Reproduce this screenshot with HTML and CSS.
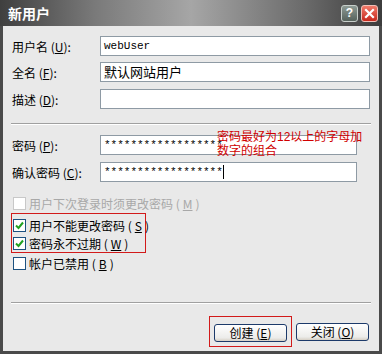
FILE: index.html
```html
<!DOCTYPE html>
<html>
<head>
<meta charset="utf-8">
<link rel="stylesheet" href="styles.css">
</head>
<body>
<div class="window">
  <div class="titlebar">
    <span class="title">新用户</span>
    <div class="tbtns">
      <span class="tbtn help">?</span>
      <span class="tbtn close"><svg width="11" height="11" viewBox="0 0 11 11"><path d="M2 2 L9 9 M9 2 L2 9" stroke="#fff" stroke-width="2.2" stroke-linecap="square"/></svg></span>
    </div>
  </div>
  <div class="body">
    <div class="row r1"><label>用户名 (<u>U</u>):</label><div class="input wide mono">webUser</div></div>
    <div class="row r2"><label>全名 (<u>F</u>):</label><div class="input wide">默认网站用户</div></div>
    <div class="row r3"><label>描述 (<u>D</u>):</label><div class="input wide"></div></div>
    <div class="sep sep1"></div>
    <div class="row r4"><label>密码 (<u>P</u>):</label><div class="input pw mono"><span>******************</span></div></div>
    <div class="row r5"><label>确认密码 (<u>C</u>):</label><div class="input pw mono">******************<span class="caret"></span></div></div>
    <div class="note">密码最好为12以上的字母加<br>数字的组合</div>
    <div class="checks">
      <div class="chk disabled"><span class="box"></span>用户下次登录时须更改密码 (<u>M</u>)</div>
      <div class="hl">
        <div class="chk"><span class="box"><svg width="9" height="9" viewBox="0 0 9 9"><path d="M1 4.5 L3.5 7 L8 1.5" fill="none" stroke="#21a121" stroke-width="2"/></svg></span>用户不能更改密码 (<u>S</u>)</div>
        <div class="chk"><span class="box"><svg width="9" height="9" viewBox="0 0 9 9"><path d="M1 4.5 L3.5 7 L8 1.5" fill="none" stroke="#21a121" stroke-width="2"/></svg></span>密码永不过期 (<u>W</u>)</div>
      </div>
      <div class="chk last"><span class="box"></span>帐户已禁用 (<u>B</u>)</div>
    </div>
    <div class="sep sep2"></div>
    <div class="buttons">
      <div class="btnwrap"><button class="btn">创建 (<u>E</u>)</button></div>
      <button class="btn">关闭 (<u>O</u>)</button>
    </div>
  </div>
</div>
</body>
</html>
```
FILE: styles.css
```css
html, body { margin: 0; padding: 0; }
body {
  width: 382px; height: 354px; overflow: hidden; background: #fff;
  font-family: "Noto Sans CJK SC", "Noto Sans", sans-serif;
  font-size: 12px; color: #000;
}
.window {
  width: 382px; height: 354px; box-sizing: border-box;
  background: #e9e9e9;
  border-left: 3px solid #4a4a4a;
  border-right: 3px solid #4a4a4a;
  border-bottom: 3px solid #4a4a4a;
  display: flex; flex-direction: column;
}
.titlebar {
  height: 26px; margin: 0 -3px; flex: none;
  background: linear-gradient(to right, #3f3f3f 0%, #7a7a7a 25%, #a6a6a6 50%, #6a6a6a 80%, #3c3c3c 100%);
  display: flex; align-items: center; justify-content: space-between;
  padding: 0 4px 0 8px;
}
.title { color: #fff; font-weight: bold; font-size: 14px; }
.tbtns { display: flex; gap: 3px; }
.tbtn {
  width: 17px; height: 17px; box-sizing: border-box; border-radius: 3px;
  display: flex; align-items: center; justify-content: center;
  color: #fff; font-weight: bold; font-size: 12px; font-family: "Liberation Sans", sans-serif;
}
.help { background: linear-gradient(#8e9a94, #56625c); border: 1px solid #c8cfcb; }
.close { background: linear-gradient(#f07a6a, #c8281c); border: 1px solid #f0c0b8; }
.body { position: relative; flex: 1; padding: 10px 9px 0 6px; }
.row { display: flex; align-items: center; height: 20px; }
.r2 { margin-top: 6px; }
.r3 { margin-top: 7px; }
.r5 { margin-top: 7px; }
label { width: 91px; padding-left: 3px; box-sizing: border-box; white-space: nowrap; }
u { text-decoration: underline; }
.input {
  height: 20px; box-sizing: border-box; background: #fff;
  border: 1px solid #8e9aa4; padding: 0 3px; line-height: 18px;
  white-space: nowrap; overflow: hidden;
}
.wide { width: 270px; }
.pw { width: 257px; }
.mono { font-family: "Liberation Mono", monospace; font-size: 11px; }
.r2 .input { font-size: 13px; }
.sep { height: 0; border-top: 1px solid #a0a0a0; border-bottom: 1px solid #fff; margin-left: 2px; margin-right: -1px; }
.sep1 { margin-top: 14px; margin-bottom: 10px; }
.caret { display: inline-block; width: 1px; height: 14px; background: #000; vertical-align: middle; }
.note {
  position: absolute; left: 214px; top: 105px;
  font-family: "Liberation Sans", "Noto Sans CJK SC", sans-serif;
  color: #d00000; font-size: 12px; line-height: 13.5px; white-space: nowrap;
}
.checks { margin-top: 12px; padding-left: 4px; }
.chk { display: flex; align-items: center; height: 19px; gap: 3px; font-size: 12px; white-space: nowrap; }
.hl .chk { height: 18px; }
.box {
  width: 13px; height: 13px; box-sizing: border-box; background: #fff; flex: none;
  border: 1px solid #1c5180; display: flex; align-items: center; justify-content: center;
}
.disabled { color: #a8a8a8; }
.disabled .box { border-color: #c8c8c8; }
.hl { border: 1px solid #d21a1a; width: 132px; margin-left: -2px; padding: 2px 0 0 1px; }
.last { margin-top: 1px; }
.sep2 { margin-top: 29px; }
.buttons { display: flex; justify-content: flex-end; align-items: center; gap: 4px; margin-top: 12px; padding-right: 1px; }
.btnwrap { border: 1px solid #d21a1a; padding: 7px 4px 4px 4px; }
.btn {
  width: 73px; height: 18px; box-sizing: border-box;
  font-family: "Noto Sans CJK SC", sans-serif; font-size: 12px; padding: 0; line-height: 14px;
  border: 1px solid #1c3a6a; border-radius: 3px;
  background: linear-gradient(#ffffff, #ececea 80%, #d6d0c5);
}
```
